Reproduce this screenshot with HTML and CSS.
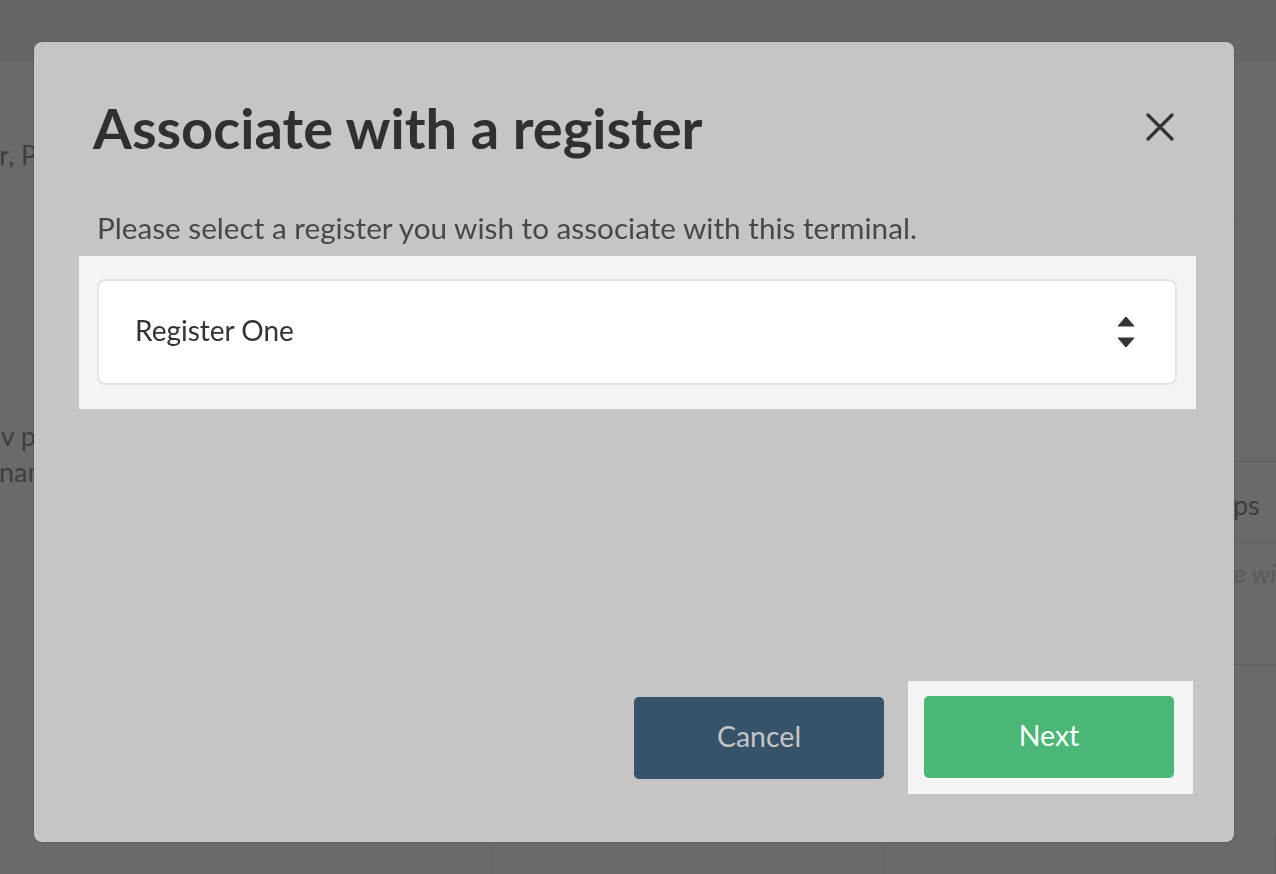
FILE: index.html
```html
<!DOCTYPE html>
<html lang="en">
<head>
<meta charset="utf-8">
<title>Associate with a register</title>
<link rel="stylesheet" href="styles.css">
</head>
<body>
<div class="page">
  <header class="topbar"></header>
  <section class="subhead">
    <p class="crumb">Terminal, Cashier, Printer</p>
  </section>
  <main class="content">
    <div class="left-col">
      <p class="note"><span class="note-line">Set up your dev p</span><span class="note-line note-line-2">Set the terminal name</span></p>
    </div>
    <div class="right-col">
      <div class="table">
        <div class="table-head">Steps</div>
        <div class="table-row"><em>Your device will be linked</em></div>
      </div>
    </div>
  </main>
  <footer class="cards">
    <div class="card"></div>
    <div class="card"></div>
    <div class="card"></div>
  </footer>
</div>

<div class="overlay">
  <div class="modal" role="dialog" aria-labelledby="modal-title">
    <div class="modal-header">
      <h1 id="modal-title" class="modal-title">Associate with a register</h1>
      <button class="close-btn" aria-label="Close">
        <svg width="28" height="28" viewBox="0 0 28 28"><path d="M2 2 L26 26 M26 2 L2 26" stroke="#333" stroke-width="3.2" stroke-linecap="round"/></svg>
      </button>
    </div>
    <p class="modal-desc">Please select a register you wish to associate with this terminal.</p>
    <div class="spot spot-select">
      <div class="select">
        <span class="select-value">Register One</span>
        <svg class="select-arrows" width="18" height="32" viewBox="0 0 18 32"><path d="M9 1 L17 10 L1 10 Z M1 22 L17 22 L9 31 Z" fill="#333" stroke="#333" stroke-width="1" stroke-linejoin="round"/></svg>
      </div>
    </div>
    <div class="modal-footer">
      <button class="btn btn-cancel">Cancel</button>
      <div class="spot spot-next">
        <button class="btn btn-next">Next</button>
      </div>
    </div>
  </div>
</div>
</body>
</html>
```

FILE: styles.css
```css
* { box-sizing: border-box; }
html, body { margin: 0; padding: 0; }
body {
  width: 1276px;
  height: 874px;
  overflow: hidden;
  background: #6a6a6a;
  font-family: Lato, "Open Sans", sans-serif;
  color: #333;
}

/* ---------- background page (dimmed) ---------- */
.page { width: 1276px; height: 874px; display: flex; flex-direction: column; }
.topbar { height: 62px; background: #666666; flex: none; }
.subhead {
  height: 158px;
  flex: none;
  border-bottom: 1px solid #636363;
  display: flex;
  align-items: center;
  padding-top: 28px;
}
.crumb {
  margin: 0 0 0 -193px;
  font-size: 27px;
  color: #3e3e3e;
  white-space: nowrap;
}
.content { flex: 1; display: flex; min-height: 0; }
.left-col { width: 493px; flex: none; padding-top: 198px; }
.note {
  margin: 0 0 0 -264px;
  width: 300px;
  text-align: right;
  font-size: 27px;
  line-height: 36px;
  color: #3e3e3e;
  white-space: nowrap;
}
.note-line { display: block; }
.note-line-2 { margin-right: -28px; }
.right-col { flex: 1; min-width: 0; padding-top: 241px; }
.table { border-top: 1px solid #5f5f5f; border-bottom: 1px solid #5f5f5f; }
.table-head {
  height: 81px;
  border-bottom: 1px solid #5f5f5f;
  padding: 26px 0 0 702px;
  font-size: 27px;
  color: #3e3e3e;
  white-space: nowrap;
  overflow: hidden;
}
.table-row {
  height: 121px;
  padding: 14px 0 0 630px;
  font-size: 26px;
  color: #5a5a5a;
  white-space: nowrap;
  overflow: hidden;
}
.cards { height: 40px; display: flex; flex: none; }
.card { width: 392px; border-right: 1px solid #626262; }
.card:first-child { width: 493px; }

/* ---------- overlay + modal ---------- */
.overlay {
  position: fixed;
  inset: 0;
  padding: 42px 0 0 34px;
}
.modal {
  width: 1200px;
  height: 800px;
  background: #c5c5c5;
  border-radius: 8px;
  box-shadow: 0 0 0 1px rgba(0,0,0,0.08);
  padding: 52px 57px 0 63px;
  display: flex;
  flex-direction: column;
}
.modal-header {
  display: flex;
  justify-content: space-between;
  align-items: flex-start;
}
.modal-title {
  margin: 0 0 0 -4px;
  font-size: 56px;
  line-height: 67px;
  font-weight: 700;
  color: #303030;
}
.close-btn {
  border: 0;
  background: none;
  padding: 0;
  margin: 19px 3px 0 0;
  width: 28px;
  height: 28px;
  display: flex;
}
.modal-desc {
  margin: 49px 0 0 0;
  font-size: 29.7px;
  line-height: 36px;
  color: #484848;
}
.spot { background: #f4f4f4; }
.spot-select {
  margin: 10px -19px 0 -18px;
  padding: 23px 19px 24px 18px;
}
.select {
  height: 106px;
  background: #fff;
  border: 2px solid #e3e3e3;
  border-radius: 8px;
  display: flex;
  align-items: center;
  justify-content: space-between;
  padding: 0 40px 0 36px;
}
.select-value { font-size: 28px; color: #333; margin-bottom: 5px; }
.select-arrows { display: block; }

.modal-footer {
  margin-top: auto;
  margin-bottom: 48px;
  display: flex;
  justify-content: flex-end;
  align-items: center;
  gap: 24px;
  margin-right: -16px;
}
.spot-next { padding: 15px 19px 16px 16px; }
.btn {
  width: 250px;
  height: 82px;
  border: 0;
  border-radius: 5px;
  font-family: Lato, "Open Sans", sans-serif;
  font-size: 28.5px;
  padding: 0 0 4px 0;
  display: block;
}
.btn-cancel { background: #36536a; color: #c5c5c5; }
.btn-next { background: #4ab776; color: #fff; }
```
